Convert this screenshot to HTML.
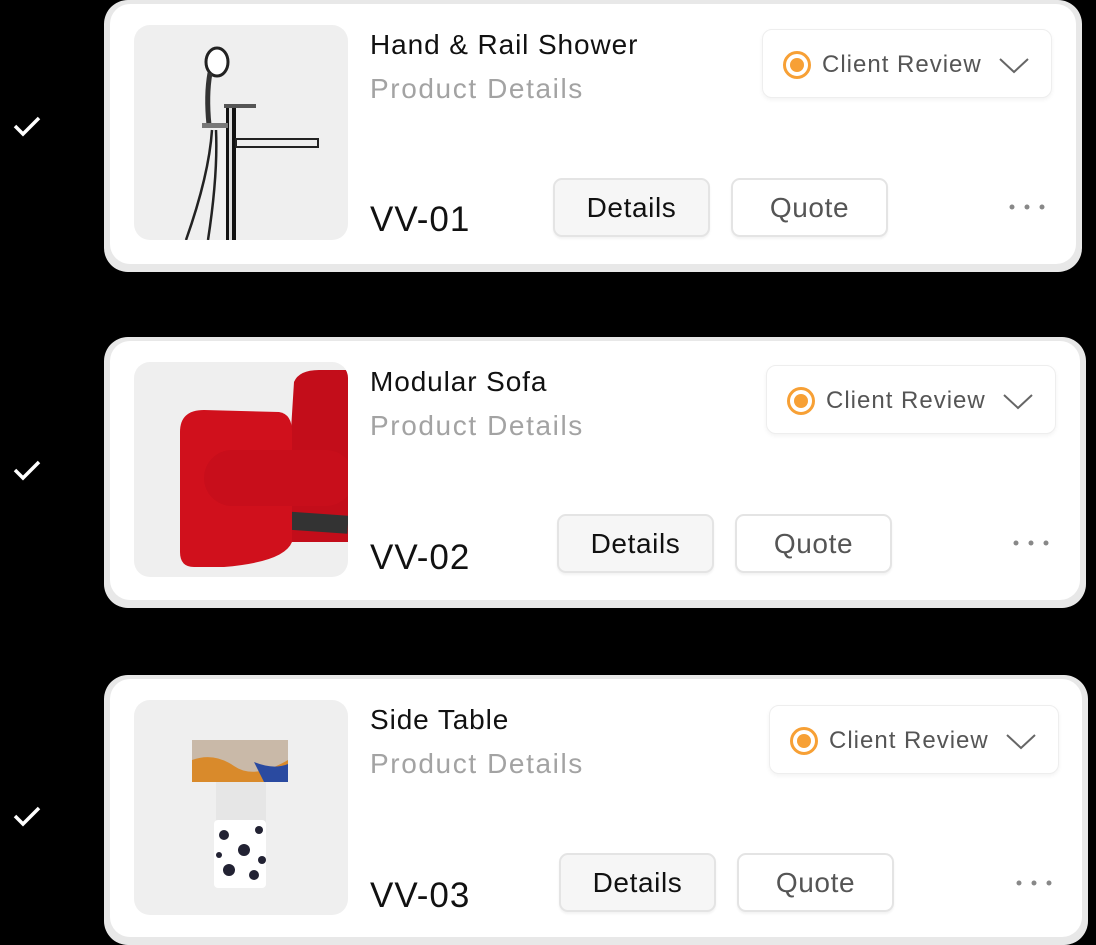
<!DOCTYPE html>
<html><head><meta charset="utf-8"><style>
*{margin:0;padding:0;box-sizing:border-box}
body{width:1096px;height:940px;background:#000;position:relative;overflow:hidden;font-family:"Liberation Sans",sans-serif}
.card{position:absolute;background:#e8e8e8;border-radius:24px}
.in{position:absolute;left:6px;top:4px;right:6px;bottom:8px;background:#fff;border-radius:20px}
.img{position:absolute;left:134px;width:214px;height:215px;background:#efefef;border-radius:16px;overflow:hidden}
.t{position:absolute;left:370px;font-size:28px;color:#111;white-space:nowrap;line-height:1;letter-spacing:0.9px}
.s{position:absolute;left:370px;font-size:28px;color:#a3a3a3;line-height:1;letter-spacing:1.6px}
.v{position:absolute;left:370px;font-size:35px;color:#111;line-height:1;letter-spacing:1px}
.btn{position:absolute;width:157px;height:59px;border:2px solid #e4e4e4;border-radius:9px;font-size:28px;display:flex;align-items:center;justify-content:center;box-shadow:0 2px 2px rgba(0,0,0,.05);letter-spacing:0.6px}
.d{background:#f6f6f6;color:#111}
.q{background:#fff;color:#555}
.dd{position:absolute;width:290px;height:69px;border:1px solid #eee;border-radius:10px;background:#fff;box-shadow:0 2px 4px rgba(0,0,0,.05)}
.dd .r{position:absolute;left:20px;top:21px;width:28px;height:28px;border:3px solid #f7a035;border-radius:50%}
.dd .r:after{content:"";position:absolute;left:4px;top:4px;width:14px;height:14px;border-radius:50%;background:#f7a035}
.dd .l{position:absolute;left:59px;top:23px;font-size:24px;color:#555;line-height:1;letter-spacing:1px}
.dd svg{position:absolute;left:236px;top:28px}
.dots{position:absolute}
.chk{position:absolute;left:12px}
</style></head><body>

<svg class="chk" style="top:114px" width="30" height="24" viewBox="0 0 30 24"><path d="M3 12 L11 20 L27 4" fill="none" stroke="#fff" stroke-width="3.5"/></svg>
<svg class="chk" style="top:458px" width="30" height="24" viewBox="0 0 30 24"><path d="M3 12 L11 20 L27 4" fill="none" stroke="#fff" stroke-width="3.5"/></svg>
<svg class="chk" style="top:804px" width="30" height="24" viewBox="0 0 30 24"><path d="M3 12 L11 20 L27 4" fill="none" stroke="#fff" stroke-width="3.5"/></svg>

<!-- card 1 -->
<div class="card" style="left:104px;top:0;width:978px;height:272px"><div class="in"></div></div>
<div class="img" style="top:25px">
<svg width="214" height="215" viewBox="0 0 214 215">
<ellipse cx="83" cy="37" rx="11" ry="14" fill="#fff" stroke="#222" stroke-width="3"/>
<path d="M76 48 Q72 70 75 100" stroke="#333" stroke-width="5" fill="none"/>
<rect x="92" y="80" width="10" height="135" fill="#111"/><rect x="95" y="80" width="3" height="135" fill="#ddd"/>
<rect x="90" y="79" width="32" height="4" fill="#555"/>
<rect x="102" y="114" width="82" height="8" fill="#eee" stroke="#222" stroke-width="2"/>
<rect x="68" y="98" width="26" height="5" fill="#777"/>
<path d="M78 105 Q75 150 52 215 M82 105 Q84 150 74 215" stroke="#222" stroke-width="2.5" fill="none"/>
</svg></div>
<div class="t" style="top:31px">Hand &amp; Rail Shower</div>
<div class="s" style="top:75px">Product Details</div>
<div class="v" style="top:202px">VV-01</div>
<div class="btn d" style="left:553px;top:178px">Details</div>
<div class="btn q" style="left:731px;top:178px">Quote</div>
<div class="dd" style="left:762px;top:29px"><div class="r"></div><div class="l">Client Review</div><svg width="30" height="16"><path d="M1 1 L15 14 L29 1" fill="none" stroke="#666" stroke-width="2"/></svg></div>
<svg class="dots" style="left:1008px;top:203px" width="40" height="8"><g fill="#888"><circle cx="4" cy="4" r="2.5"/><circle cx="19" cy="4" r="2.5"/><circle cx="34" cy="4" r="2.5"/></g></svg>

<!-- card 2 -->
<div class="card" style="left:104px;top:337px;width:982px;height:271px"><div class="in"></div></div>
<div class="img" style="top:362px">
<svg width="214" height="215" viewBox="0 0 214 215">
<path d="M160 20 Q165 8 185 8 L214 8 L214 180 L150 180 Z" fill="#c30d1a"/>
<rect x="112" y="150" width="102" height="18" fill="#333" transform="rotate(4 160 160)"/>
<path d="M46 70 Q46 48 70 48 L145 50 Q158 52 158 70 L158 180 Q150 200 90 205 L60 205 Q46 205 46 190 Z" fill="#d0101c"/>
<rect x="70" y="88" width="150" height="56" rx="28" fill="#c80e1b"/>
</svg></div>
<div class="t" style="top:368px">Modular Sofa</div>
<div class="s" style="top:412px">Product Details</div>
<div class="v" style="top:540px">VV-02</div>
<div class="btn d" style="left:557px;top:514px">Details</div>
<div class="btn q" style="left:735px;top:514px">Quote</div>
<div class="dd" style="left:766px;top:365px"><div class="r"></div><div class="l">Client Review</div><svg width="30" height="16"><path d="M1 1 L15 14 L29 1" fill="none" stroke="#666" stroke-width="2"/></svg></div>
<svg class="dots" style="left:1012px;top:539px" width="40" height="8"><g fill="#888"><circle cx="4" cy="4" r="2.5"/><circle cx="19" cy="4" r="2.5"/><circle cx="34" cy="4" r="2.5"/></g></svg>

<!-- card 3 -->
<div class="card" style="left:104px;top:675px;width:984px;height:270px"><div class="in"></div></div>
<div class="img" style="top:700px">
<svg width="214" height="215" viewBox="0 0 214 215">
<rect x="82" y="80" width="50" height="50" fill="#e6e6e6"/>
<rect x="80" y="120" width="52" height="68" rx="4" fill="#fff"/>
<g fill="#223"><circle cx="90" cy="135" r="5"/><circle cx="110" cy="150" r="6"/><circle cx="125" cy="130" r="4"/><circle cx="95" cy="170" r="6"/><circle cx="120" cy="175" r="5"/><circle cx="85" cy="155" r="3"/><circle cx="128" cy="160" r="4"/></g>
<rect x="58" y="40" width="96" height="42" fill="#c9b9a8"/>
<path d="M58 60 Q80 52 100 66 T154 60 L154 82 L58 82 Z" fill="#d98a2b"/>
<path d="M120 62 Q140 70 154 64 L154 82 L130 82 Z" fill="#2a4aa0"/>
</svg></div>
<div class="t" style="top:706px">Side Table</div>
<div class="s" style="top:750px">Product Details</div>
<div class="v" style="top:878px">VV-03</div>
<div class="btn d" style="left:559px;top:853px">Details</div>
<div class="btn q" style="left:737px;top:853px">Quote</div>
<div class="dd" style="left:769px;top:705px"><div class="r"></div><div class="l">Client Review</div><svg width="30" height="16"><path d="M1 1 L15 14 L29 1" fill="none" stroke="#666" stroke-width="2"/></svg></div>
<svg class="dots" style="left:1015px;top:879px" width="40" height="8"><g fill="#888"><circle cx="4" cy="4" r="2.5"/><circle cx="19" cy="4" r="2.5"/><circle cx="34" cy="4" r="2.5"/></g></svg>

</body></html>
